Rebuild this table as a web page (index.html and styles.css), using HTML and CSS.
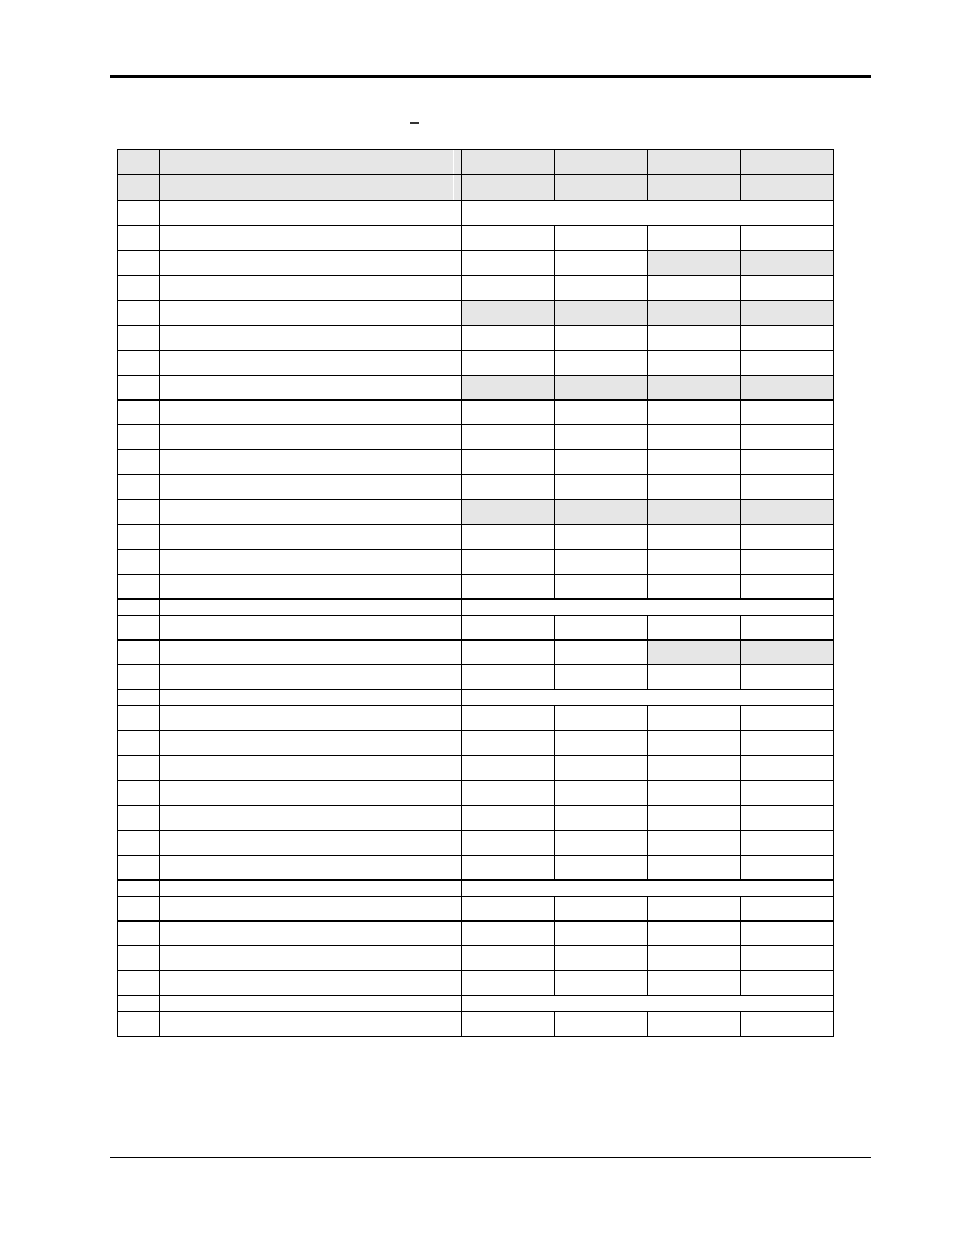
FILE: index.html
```html
<!DOCTYPE html>
<html>
<head>
<meta charset="utf-8">
<link rel="stylesheet" href="styles.css">
</head>
<body>
<div class="page">
  <div class="rule-top"></div>
  <div class="title"><span class="dash"></span></div>
  <table class="grid">
    <colgroup>
      <col class="c-num"><col class="c-desc"><col class="c-val"><col class="c-val"><col class="c-val"><col class="c-val">
    </colgroup>
    <tbody>
      <tr class="hd r25"><td></td><td class="split"></td><td></td><td></td><td></td><td></td></tr>
      <tr class="hd r26"><td></td><td class="split"></td><td></td><td></td><td></td><td></td></tr>
      <tr class="r25"><td></td><td></td><td colspan="4"></td></tr>
      <tr class="r25"><td></td><td></td><td></td><td></td><td></td><td></td></tr>
      <tr class="r25"><td></td><td></td><td></td><td></td><td class="g"></td><td class="g"></td></tr>
      <tr class="r25"><td></td><td></td><td></td><td></td><td></td><td></td></tr>
      <tr class="r25"><td></td><td></td><td class="g"></td><td class="g"></td><td class="g"></td><td class="g"></td></tr>
      <tr class="r25"><td></td><td></td><td></td><td></td><td></td><td></td></tr>
      <tr class="r25"><td></td><td></td><td></td><td></td><td></td><td></td></tr>
      <tr class="r25 thick"><td></td><td></td><td class="g"></td><td class="g"></td><td class="g"></td><td class="g"></td></tr>
      <tr class="r24"><td></td><td></td><td></td><td></td><td></td><td></td></tr>
      <tr class="r25"><td></td><td></td><td></td><td></td><td></td><td></td></tr>
      <tr class="r25"><td></td><td></td><td></td><td></td><td></td><td></td></tr>
      <tr class="r25"><td></td><td></td><td></td><td></td><td></td><td></td></tr>
      <tr class="r25"><td></td><td></td><td class="g"></td><td class="g"></td><td class="g"></td><td class="g"></td></tr>
      <tr class="r25"><td></td><td></td><td></td><td></td><td></td><td></td></tr>
      <tr class="r25"><td></td><td></td><td></td><td></td><td></td><td></td></tr>
      <tr class="r25 thick"><td></td><td></td><td></td><td></td><td></td><td></td></tr>
      <tr class="r16"><td></td><td></td><td colspan="4"></td></tr>
      <tr class="r25 thick"><td></td><td></td><td></td><td></td><td></td><td></td></tr>
      <tr class="r24"><td></td><td></td><td></td><td></td><td class="g"></td><td class="g"></td></tr>
      <tr class="r25"><td></td><td></td><td></td><td></td><td></td><td></td></tr>
      <tr class="r16"><td></td><td></td><td colspan="4"></td></tr>
      <tr class="r25"><td></td><td></td><td></td><td></td><td></td><td></td></tr>
      <tr class="r25"><td></td><td></td><td></td><td></td><td></td><td></td></tr>
      <tr class="r25"><td></td><td></td><td></td><td></td><td></td><td></td></tr>
      <tr class="r25"><td></td><td></td><td></td><td></td><td></td><td></td></tr>
      <tr class="r25"><td></td><td></td><td></td><td></td><td></td><td></td></tr>
      <tr class="r25"><td></td><td></td><td></td><td></td><td></td><td></td></tr>
      <tr class="r25 thick"><td></td><td></td><td></td><td></td><td></td><td></td></tr>
      <tr class="r16"><td></td><td></td><td colspan="4"></td></tr>
      <tr class="r25 thick"><td></td><td></td><td></td><td></td><td></td><td></td></tr>
      <tr class="r24"><td></td><td></td><td></td><td></td><td></td><td></td></tr>
      <tr class="r25"><td></td><td></td><td></td><td></td><td></td><td></td></tr>
      <tr class="r25"><td></td><td></td><td></td><td></td><td></td><td></td></tr>
      <tr class="r16"><td></td><td></td><td colspan="4"></td></tr>
      <tr class="r25"><td></td><td></td><td></td><td></td><td></td><td></td></tr>
    </tbody>
  </table>
  <div class="rule-bottom"></div>
</div>
</body>
</html>
```
FILE: styles.css
```css
html, body {
  margin: 0;
  padding: 0;
  background: #fff;
  font-family: "Liberation Sans", Arial, sans-serif;
}

.page {
  width: 761px;
  padding: 75px 0 0 110px;
}

.rule-top {
  height: 3px;
  background: #000;
}

.title {
  height: 2px;
  margin-top: 44px;
  display: flex;
}

.dash {
  display: block;
  width: 9px;
  height: 2px;
  margin-left: 300px;
  background: #333;
}

.grid {
  margin: 25px 0 0 7px;
  width: 717px;
  table-layout: fixed;
  border-collapse: separate;
  border-spacing: 0;
  border-top: 1px solid #000;
  border-left: 1px solid #000;
}

.c-num { width: 42px; }
.c-desc { width: 302px; }
.c-val { width: 93px; }

.grid td {
  box-sizing: border-box;
  padding: 0;
  border-right: 1px solid #000;
  border-bottom: 1px solid #000;
  background: #fff;
}

.grid .r25 td { height: 25px; }
.grid .r26 td { height: 26px; }
.grid .r24 td { height: 24px; }
.grid .r16 td { height: 16px; }

.grid .thick td { border-bottom-width: 2px; }

.grid .hd td,
.grid td.g {
  background: #e6e6e6;
}

.grid .hd td.split {
  background: linear-gradient(to right, #e6e6e6 293px, #fff 293px, #fff 294px, #e6e6e6 294px);
}

.rule-bottom {
  height: 1px;
  margin-top: 120px;
  background: #000;
}
```
